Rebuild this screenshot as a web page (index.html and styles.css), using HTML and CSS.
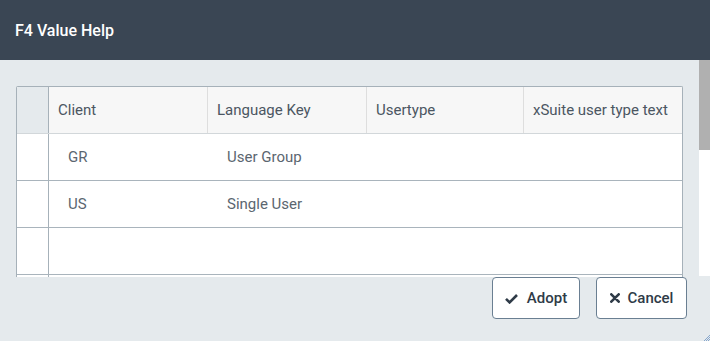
FILE: index.html
```html
<!DOCTYPE html>
<html>
<head>
<meta charset="utf-8">
<link rel="stylesheet" href="styles.css">
</head>
<body>
<div class="dialog">
  <div class="titlebar">F4 Value Help</div>
  <div class="main">
    <div class="content">
      <div class="table">
        <div class="row head">
          <div class="cell sel"></div>
          <div class="cell c1">Client</div>
          <div class="cell c2">Language Key</div>
          <div class="cell c3">Usertype</div>
          <div class="cell c4">xSuite user type text</div>
        </div>
        <div class="row">
          <div class="cell sel"></div>
          <div class="cell c1">GR</div>
          <div class="cell c2">User Group</div>
          <div class="cell c3"></div>
          <div class="cell c4"></div>
        </div>
        <div class="row">
          <div class="cell sel"></div>
          <div class="cell c1">US</div>
          <div class="cell c2">Single User</div>
          <div class="cell c3"></div>
          <div class="cell c4"></div>
        </div>
        <div class="row">
          <div class="cell sel"></div>
          <div class="cell c1"></div>
          <div class="cell c2"></div>
          <div class="cell c3"></div>
          <div class="cell c4"></div>
        </div>
        <div class="row">
          <div class="cell sel"></div>
          <div class="cell c1"></div>
          <div class="cell c2"></div>
          <div class="cell c3"></div>
          <div class="cell c4"></div>
        </div>
      </div>
      <div class="actions">
        <button class="btn adopt">
          <svg width="13" height="11" viewBox="0 0 13 11"><path d="M1 5.8 L4.6 9.4 L12 2" fill="none" stroke="#2f3b48" stroke-width="2.6" stroke-linejoin="miter"/></svg>
          Adopt
        </button>
        <button class="btn cancel">
          <svg width="10" height="10" viewBox="0 0 10 10"><path d="M1.3 1.3 L8.7 8.7 M8.7 1.3 L1.3 8.7" fill="none" stroke="#2f3b48" stroke-width="2.6" stroke-linecap="round"/></svg>
          Cancel
        </button>
      </div>
    </div>
    <div class="vscroll">
      <div class="thumb"></div>
    </div>
  </div>
  <svg class="grip" width="7" height="7" viewBox="0 0 7 7"><path d="M1 7 L7 1 M3 7 L7 3 M5 7 L7 5" stroke="#6f95c4" stroke-width="0.8"/></svg>
</div>
</body>
</html>
```
FILE: styles.css
```css
* { box-sizing: border-box; }
html, body { margin: 0; padding: 0; }
body {
  width: 710px;
  height: 341px;
  overflow: hidden;
  font-family: Roboto, "Liberation Sans", sans-serif;
  background: #e5eaed;
}
.dialog {
  position: relative;
  width: 710px;
  height: 341px;
  display: flex;
  flex-direction: column;
  background: #e5eaed;
}
.titlebar {
  height: 60px;
  flex: none;
  background: #3a4654;
  color: #ffffff;
  font-size: 16px;
  font-weight: 500;
  padding-left: 15px;
  display: flex;
  align-items: center;
}
.main {
  flex: 1;
  display: flex;
}
.content {
  flex: 1;
  padding: 26px 12px 0 16px;
  display: flex;
  flex-direction: column;
}
.table {
  width: 667px;
  height: 191px;
  overflow: hidden;
  border: 1px solid #a6b1b9;
  border-bottom: none;
  border-radius: 2px 2px 0 0;
  background: #ffffff;
}
.row {
  display: flex;
  height: 47px;
  border-bottom: 1px solid #a9b4bc;
  background: #ffffff;
}
.row.head {
  background: #f7f7f7;
  border-bottom: 1px solid #d2d7da;
}
.cell {
  height: 46px;
  display: flex;
  align-items: center;
  font-size: 15px;
  color: #5b6670;
  white-space: nowrap;
  border-right: 1px solid transparent;
}
.cell.sel {
  width: 32px;
  border-right: 1px solid #a6b1b9;
}
.head .cell.sel { background: #e5eaed; }
.c1 { width: 159px; }
.c2 { width: 159px; }
.c3 { width: 157px; }
.c4 { width: 158px; border-right: none; }
.head .cell {
  color: #4b5662;
  padding-left: 9px;
  border-right-color: #dedede;
}
.head .cell.sel { padding-left: 0; border-right-color: #a6b1b9; }
.head .c4 { border-right: none; }
.row:not(.head) .cell.c1,
.row:not(.head) .cell.c2 { padding-left: 19px; }
.actions {
  display: flex;
  justify-content: flex-end;
  gap: 16px;
  padding-right: 0;
}
.btn {
  height: 42px;
  background: #ffffff;
  border: 1px solid #6a7f92;
  border-radius: 4px;
  font-family: Roboto, "Liberation Sans", sans-serif;
  font-size: 15px;
  font-weight: 500;
  color: #2f3b48;
  display: flex;
  align-items: center;
  justify-content: center;
  gap: 9px;
  padding: 0;
}
.adopt { width: 88px; }
.cancel { width: 91px; gap: 8px; }
.vscroll {
  width: 11px;
  height: 216px;
  background: #ffffff;
  flex: none;
}
.thumb {
  height: 90px;
  background: #b0b0b0;
}
.grip {
  position: absolute;
  right: 0;
  bottom: 0;
}
```
